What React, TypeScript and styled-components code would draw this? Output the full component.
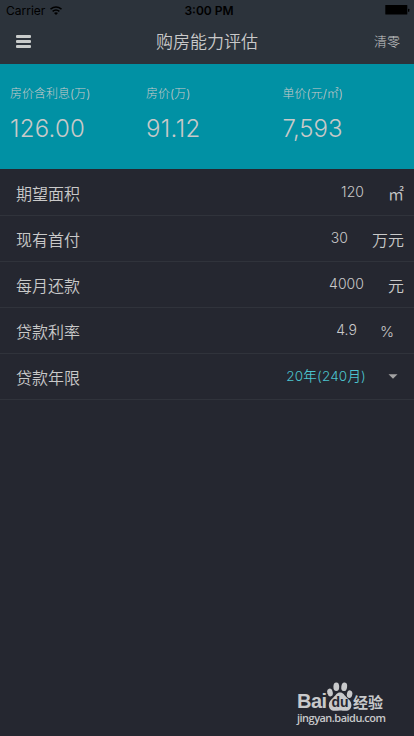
import React from "react";
import styled, { createGlobalStyle } from "styled-components";

const GlobalStyle = createGlobalStyle`
  * { box-sizing: border-box; }
  body {
    margin: 0;
    background: #252730;
    color: #c9c9c9;
    font-family: Inter, "Noto Sans CJK SC", sans-serif;
    font-weight: 350;
  }
`;

const Screen = styled.div`
  position: relative;
  width: 414px;
  height: 736px;
  overflow: hidden;
  display: flex;
  flex-direction: column;
  background: #252730;
`;

const StatusBar = styled.div`
  display: grid;
  grid-template-columns: 1fr auto 1fr;
  align-items: center;
  height: 20px;
  padding: 1px 4px 0 6px;
  background: #2c333b;
  color: #000;
  font-size: 12px;
  line-height: 20px;
`;

const Carrier = styled.div`
  display: flex;
  align-items: center;
  gap: 5px;
  font-weight: 400;
  letter-spacing: 0;
`;

const WifiSlot = styled.span`
  display: flex;
  padding-bottom: 2px;
`;

const Clock = styled.div`
  margin-left: 2px;
  font-weight: 600;
  letter-spacing: 0;
`;

const BatterySlot = styled.div`
  display: flex;
  justify-content: flex-end;
  padding-bottom: 2px;
`;

const NavBar = styled.header`
  display: grid;
  grid-template-columns: 1fr auto 1fr;
  align-items: center;
  height: 44px;
  padding: 0 14px 0 16px;
  background: #2c333b;
`;

const MenuButton = styled.button`
  display: flex;
  width: 15px;
  padding: 0 0 2px;
  border: 0;
  background: none;
`;

const Title = styled.h1`
  margin: 0 2px 0 0;
  font-size: 17px;
  font-weight: 350;
  line-height: 24px;
`;

const ClearButton = styled.button`
  justify-self: end;
  padding: 0 0 2px;
  border: 0;
  background: none;
  color: inherit;
  font: inherit;
  font-size: 13px;
  font-weight: 300;
  line-height: 20px;
`;

const Summary = styled.section`
  display: grid;
  grid-template-columns: 136px 136.5px 1fr;
  height: 105px;
  padding: 20px 0 0 10px;
  background: #0191a4;
`;

const Stat = styled.div`
  display: flex;
  flex-direction: column;
`;

const StatLabel = styled.span`
  font-size: 12px;
  font-weight: 300;
  line-height: 20px;
`;

const StatValue = styled.span<{ $spacing: number }>`
  margin-top: 9px;
  font-size: 24px;
  line-height: 32px;
  letter-spacing: ${(p) => p.$spacing}px;
`;

const Row = styled.div`
  display: flex;
  align-items: center;
  height: 46px;
  padding: 2px 0 0 16px;
  border-bottom: 1px solid #30333b;
  &:first-child { height: 47px; padding-top: 3px; }
`;

const RowLabel = styled.span`
  flex: 1;
  font-size: 16px;
  line-height: 24px;
`;

const RowValue = styled.span<{ $accent?: boolean }>`
  padding-bottom: 3px;
  font-size: ${(p) => (p.$accent ? 13.5 : 14)}px;
  line-height: 20px;
  letter-spacing: ${(p) => (p.$accent ? 0.2 : 0.05)}px;
  color: ${(p) => (p.$accent ? "#4cc3ce" : "inherit")};
`;

const RowUnit = styled.span<{ $gap: number; $end: number }>`
  display: flex;
  justify-content: flex-end;
  margin-left: ${(p) => p.$gap}px;
  margin-right: ${(p) => p.$end}px;
  font-size: 16px;
  line-height: 24px;
`;

const ArrowSlot = styled.span`
  display: flex;
  padding-bottom: 2px;
`;

const Percent = styled.span`
  width: 13px;
  font-size: 15px;
  text-align: center;
`;

const Watermark = styled.div`
  position: absolute;
  left: 297px;
  top: 682px;
  width: 90px;
  color: #c8c9cb;
`;

const Brand = styled.div`
  display: flex;
  align-items: flex-end;
  height: 29px;
`;

const BrandLatin = styled.span`
  width: 30px;
  font: 700 20px/20px "Liberation Sans", sans-serif;
  letter-spacing: -0.5px;
`;

const Paw = styled.div`
  position: relative;
  width: 26px;
  height: 29px;
`;

const PawText = styled.span`
  position: absolute;
  left: 0;
  right: 0;
  bottom: 1px;
  text-align: center;
  color: #252730;
  font: 700 14px/15px "Liberation Sans", sans-serif;
`;

const BrandChinese = styled.span`
  font: 700 15px/18px "Noto Sans CJK SC", sans-serif;
`;

const Site = styled.div`
  font: 600 11px/14px "Open Sans", sans-serif;
  letter-spacing: -0.52px;
  white-space: nowrap;
`;

const stats = [
  { label: "房价含利息(万)", value: "126.00", spacing: 0.25 },
  { label: "房价(万)", value: "91.12", spacing: 0.35 },
  { label: "单价(元/㎡)", value: "7,593", spacing: 0 },
];

const rows = [
  { label: "期望面积", value: "120", unit: "㎡", gap: 24, end: 10 },
  { label: "现有首付", value: "30", unit: "万元", gap: 24, end: 10 },
  { label: "每月还款", value: "4000", unit: "元", gap: 24, end: 10 },
  { label: "贷款利率", value: "4.9", unit: "%", gap: 23, end: 21 },
];

const WifiIcon = () => (
  <svg width="12" height="9" viewBox="0 0 12 9" fill="none" stroke="#000" strokeWidth="1.5">
    <path d="M0.5 3.2Q6-1.2 11.5 3.2M2.6 5.4Q6 2.7 9.4 5.4" />
    <path d="M4 6.9Q6 5.5 8 6.9L6 9Z" fill="#000" stroke="none" />
  </svg>
);

const BatteryIcon = () => (
  <svg width="25" height="10" viewBox="0 0 25 10">
    <rect x="0.3" width="22" height="9.5" rx="0.6" />
    <rect x="23" y="3.7" width="1.3" height="3" rx="0.5" />
  </svg>
);

const MenuIcon = () => (
  <svg width="15" height="13" viewBox="0 0 15 13" fill="#c9cccb">
    <rect width="15" height="3" rx="1" />
    <rect y="5" width="15" height="3" rx="1" />
    <rect y="10" width="15" height="3" rx="1" />
  </svg>
);

const PawIcon = () => (
  <svg width="26" height="29" viewBox="0 0 26 29" fill="#c8c9cb">
    <ellipse cx="9.3" cy="4.8" rx="2.9" ry="4.3" />
    <ellipse cx="17.2" cy="4.8" rx="2.9" ry="4.3" transform="rotate(8 17.2 4.8)" />
    <ellipse cx="3" cy="10.5" rx="2.7" ry="3.9" transform="rotate(-15 3 10.5)" />
    <ellipse cx="22.6" cy="12.2" rx="2.7" ry="3.9" transform="rotate(12 22.6 12.2)" />
    <path d="M13 10.5C9.8 10.5 8.9 13.2 6.4 15.4C3.8 17.7 1.8 19.6 1.8 23C1.8 26.6 4.2 28.8 7.5 28.8C9.5 28.8 11 28.4 13 28.4S16.6 28.8 18.8 28.8C22 28.8 24.4 26.6 24.4 23C24.4 19.6 22.2 17.6 19.7 15.4C17.2 13.2 16.3 10.5 13 10.5Z" />
  </svg>
);

export default function App() {
  return (
    <>
      <GlobalStyle />
      <Screen>
        <StatusBar>
          <Carrier>Carrier<WifiSlot><WifiIcon /></WifiSlot></Carrier>
          <Clock>3:00 PM</Clock>
          <BatterySlot><BatteryIcon /></BatterySlot>
        </StatusBar>
        <NavBar>
          <MenuButton aria-label="菜单"><MenuIcon /></MenuButton>
          <Title>购房能力评估</Title>
          <ClearButton>清零</ClearButton>
        </NavBar>
        <Summary>
          {stats.map((s) => (
            <Stat key={s.label}>
              <StatLabel>{s.label}</StatLabel>
              <StatValue $spacing={s.spacing}>{s.value}</StatValue>
            </Stat>
          ))}
        </Summary>
        <main>
          {rows.map((r) => (
            <Row key={r.label}>
              <RowLabel>{r.label}</RowLabel>
              <RowValue>{r.value}</RowValue>
              <RowUnit $gap={r.gap} $end={r.end}>
                {r.unit === "%" ? <Percent>%</Percent> : r.unit}
              </RowUnit>
            </Row>
          ))}
          <Row>
            <RowLabel>贷款年限</RowLabel>
            <RowValue $accent>20年(240月)</RowValue>
            <RowUnit $gap={22} $end={16}>
              <ArrowSlot>
                <svg width="10" height="5" viewBox="0 0 10 5"><path d="M0.5 0.3H9.5L5 4.8Z" fill="#a3a3a3" /></svg>
              </ArrowSlot>
            </RowUnit>
          </Row>
        </main>
        <Watermark>
          <Brand>
            <BrandLatin>Bai</BrandLatin>
            <Paw><PawIcon /><PawText>du</PawText></Paw>
            <BrandChinese>经验</BrandChinese>
          </Brand>
          <Site>jingyan.baidu.com</Site>
        </Watermark>
      </Screen>
    </>
  );
}
